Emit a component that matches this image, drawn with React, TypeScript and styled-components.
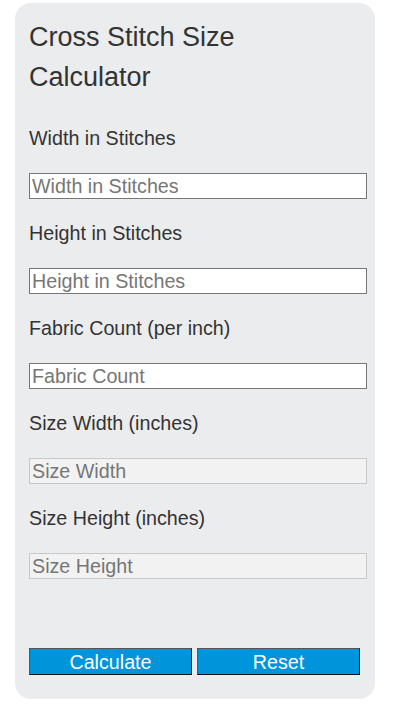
import React, { useState } from 'react';
import styled, { createGlobalStyle } from 'styled-components';

const Global = createGlobalStyle`
	body{
		margin:0;
		background:#fff;
		font-family:"Liberation Sans", Arial, sans-serif;
	}
`
const Page = styled.div`
	padding:3px 0 0 15px;
`
const Card = styled.div`
	width:360px;
	box-sizing:border-box;
	background:#ebeced;
	border-radius:16px;
	padding:14px 8px 24px 14px;
	color:#333;
`
const Title = styled.h1`
	max-width:270px;
	margin:0 0 27px;
	font-size:27px;
	font-weight:normal;
	line-height:40px;
`
const Field = styled.div`
	display:flex;
	flex-direction:column;
	gap:20px;
	margin-bottom:20px;
`
const Label = styled.label`
	font-size:19.7px;
	line-height:29px;
`
const Input = styled.input<{ $readonly?: boolean }>`
	width:338px;
	height:26px;
	box-sizing:border-box;
	margin:0;
	padding:0 2px;
	font-family:"Liberation Sans", Arial, sans-serif;
	font-size:19.7px;
	color:#333;
	background:${p => (p.$readonly ? '#f2f2f2' : '#fff')};
	border:1px solid ${p => (p.$readonly ? '#c8c8c8' : '#767676')};
	outline:none;
	&::placeholder{
		color:#767676;
	}
`
const Buttons = styled.div`
	display:flex;
	gap:5px;
	margin-top:69px;
`
const Button = styled.button`
	width:163px;
	height:27px;
	box-sizing:border-box;
	padding:0;
	background:#0095da;
	color:#fff;
	font-family:"Liberation Sans", Arial, sans-serif;
	font-size:19.7px;
	line-height:24px;
	border:1px solid #111;
	border-top-color:#555;
	border-left-color:#555;
	cursor:pointer;
`

const fields = [
	{ label: 'Width in Stitches', placeholder: 'Width in Stitches', key: 'w' },
	{ label: 'Height in Stitches', placeholder: 'Height in Stitches', key: 'h' },
	{ label: 'Fabric Count (per inch)', placeholder: 'Fabric Count', key: 'c' },
]

export default function App() {
	const [vals, setVals] = useState<Record<string, string>>({ w: '', h: '', c: '' })
	const [size, setSize] = useState({ w: '', h: '' })

	const calc = () => {
		const c = parseFloat(vals.c)
		const w = parseFloat(vals.w)
		const h = parseFloat(vals.h)
		if (!c) return
		setSize({
			w: isNaN(w) ? '' : (w / c).toFixed(2),
			h: isNaN(h) ? '' : (h / c).toFixed(2),
		})
	}
	const reset = () => {
		setVals({ w: '', h: '', c: '' })
		setSize({ w: '', h: '' })
	}

	return (
		<>
			<Global />
			<Page>
				<Card>
					<Title>Cross Stitch Size Calculator</Title>
					{fields.map(f => (
						<Field key={f.key}>
							<Label>{f.label}</Label>
							<Input
								type="number"
								placeholder={f.placeholder}
								value={vals[f.key]}
								onChange={e => setVals({ ...vals, [f.key]: e.target.value })}
							/>
						</Field>
					))}
					<Field>
						<Label>Size Width (inches)</Label>
						<Input $readonly readOnly placeholder="Size Width" value={size.w} />
					</Field>
					<Field>
						<Label>Size Height (inches)</Label>
						<Input $readonly readOnly placeholder="Size Height" value={size.h} />
					</Field>
					<Buttons>
						<Button onClick={calc}>Calculate</Button>
						<Button onClick={reset}>Reset</Button>
					</Buttons>
				</Card>
			</Page>
		</>
	)
}
